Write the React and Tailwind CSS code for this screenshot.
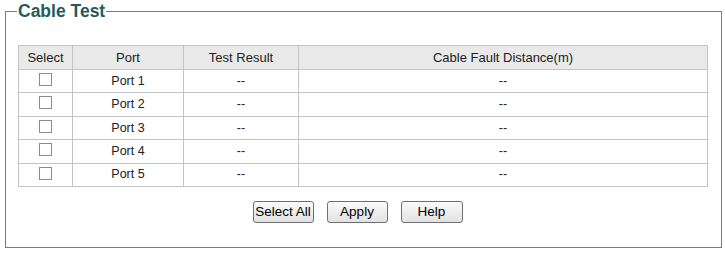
const ports = ['Port 1', 'Port 2', 'Port 3', 'Port 4', 'Port 5'];

function Box() {
  return <span className="inline-block w-[13px] h-[13px] border border-[#8c8c8c] bg-white align-middle -mt-[4px]" />;
}

function Btn({ children, w }) {
  return (
    <button
      className={`h-[22px] ${w} rounded-[3px] border border-[#6f6f6f] bg-gradient-to-b from-[#fafafa] to-[#e2e2e2] text-[13.5px] leading-none text-black`}
    >
      {children}
    </button>
  );
}

export default function App() {
  return (
    <div className="w-[725px] h-[253px] bg-white pl-[5px] pt-[1px] font-['Liberation_Sans',Arial,sans-serif] text-[12.5px] text-[#222]">
      <fieldset className="w-[717px] h-[247px] border border-[#7a7a7a] px-[12px]">
        <legend className="ml-[-1px] px-[1px] text-[17.5px] leading-[20px] font-bold text-[#1f5c5e]">Cable Test</legend>

        <table className="mt-[24px] w-[690px] border-collapse border border-[#c4c4c4] text-center">
          <thead>
            <tr className="h-[24px] bg-[#e9e9e9] text-[13px]">
              <th className="w-[54px] border border-[#c4c4c4] font-normal">Select</th>
              <th className="w-[111px] border border-[#c4c4c4] font-normal">Port</th>
              <th className="w-[115px] border border-[#c4c4c4] font-normal">Test Result</th>
              <th className="border border-[#c4c4c4] font-normal">Cable Fault Distance(m)</th>
            </tr>
          </thead>
          <tbody>
            {ports.map((p) => (
              <tr key={p} className="h-[23.4px]">
                <td className="border border-[#c4c4c4]"><Box /></td>
                <td className="border border-[#c4c4c4]">{p}</td>
                <td className="border border-[#c4c4c4]">--</td>
                <td className="border border-[#c4c4c4]">--</td>
              </tr>
            ))}
          </tbody>
        </table>

        <div className="mt-[14px] flex justify-center gap-[13px] pr-[12px]">
          <Btn w="w-[61px]">Select All</Btn>
          <Btn w="w-[61px]">Apply</Btn>
          <Btn w="w-[62px]">Help</Btn>
        </div>
      </fieldset>
    </div>
  );
}
